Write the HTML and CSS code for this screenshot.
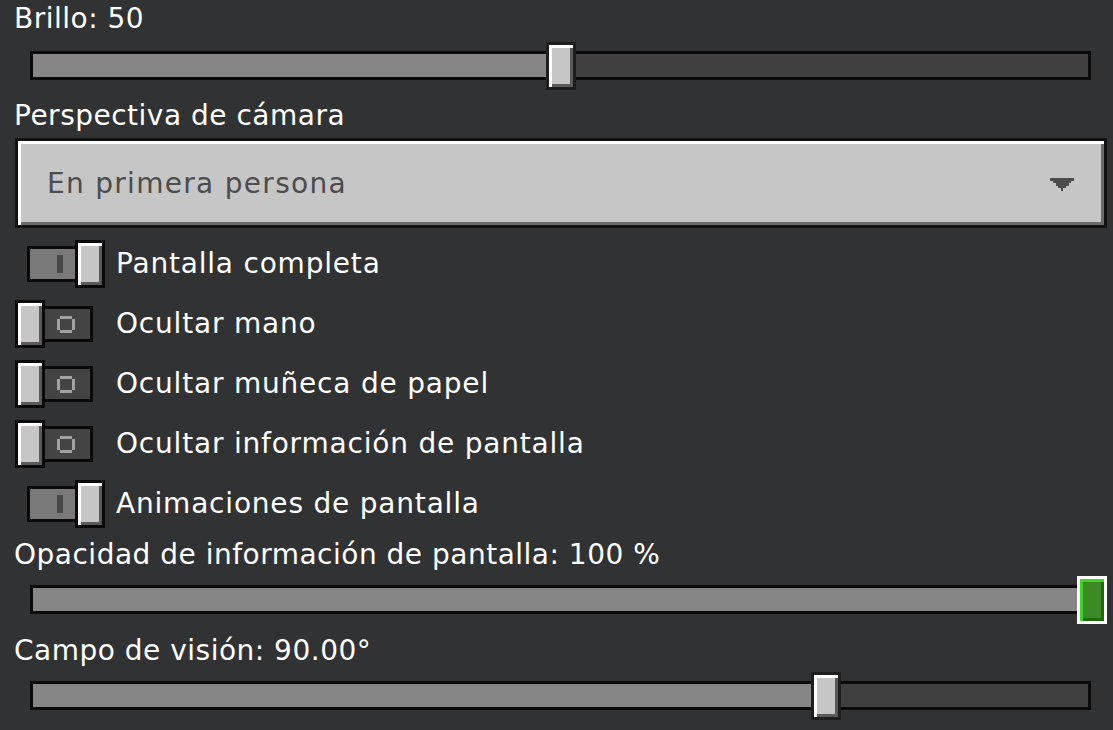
FILE: index.html
```html
<!DOCTYPE html>
<html lang="es">
<head>
<meta charset="utf-8">
<title>Ajustes de vídeo</title>
<link rel="stylesheet" href="styles.css">
</head>
<body>
<div class="page">
  <div class="label label-first">Brillo: 50</div>
  <div class="slider">
    <div class="track"><div class="fill" style="width:50%"></div></div>
    <div class="thumb" style="left:calc(50% - 15px)"></div>
  </div>

  <div class="label label-mid">Perspectiva de cámara</div>
  <div class="dropdown">
    <span class="dropdown-text">En primera persona</span>
    <svg class="arrow" width="24" height="13" viewBox="0 0 9 5" shape-rendering="crispEdges">
      <rect x="0" y="0" width="9" height="1" fill="#4c4c4c"/>
      <rect x="1" y="1" width="7" height="1" fill="#4c4c4c"/>
      <rect x="2" y="2" width="5" height="1" fill="#4c4c4c"/>
      <rect x="3" y="3" width="3" height="1" fill="#4c4c4c"/>
      <rect x="4" y="4" width="1" height="1" fill="#4c4c4c"/>
    </svg>
  </div>

  <div class="toggles">
    <div class="row">
      <div class="toggle on"><div class="ttrack"><i class="bar"></i></div><div class="tthumb"></div></div>
      <span class="row-text">Pantalla completa</span>
    </div>
    <div class="row">
      <div class="toggle off"><div class="ttrack"><svg class="ring" width="18" height="17" viewBox="0 0 18 17" shape-rendering="crispEdges"><path d="M3 0H15V3H3Z M3 14H15V17H3Z M0 3H3V14H0Z M15 3H18V14H15Z" fill="#a3a3a3"/></svg></div><div class="tthumb"></div></div>
      <span class="row-text">Ocultar mano</span>
    </div>
    <div class="row">
      <div class="toggle off"><div class="ttrack"><svg class="ring" width="18" height="17" viewBox="0 0 18 17" shape-rendering="crispEdges"><path d="M3 0H15V3H3Z M3 14H15V17H3Z M0 3H3V14H0Z M15 3H18V14H15Z" fill="#a3a3a3"/></svg></div><div class="tthumb"></div></div>
      <span class="row-text">Ocultar muñeca de papel</span>
    </div>
    <div class="row">
      <div class="toggle off"><div class="ttrack"><svg class="ring" width="18" height="17" viewBox="0 0 18 17" shape-rendering="crispEdges"><path d="M3 0H15V3H3Z M3 14H15V17H3Z M0 3H3V14H0Z M15 3H18V14H15Z" fill="#a3a3a3"/></svg></div><div class="tthumb"></div></div>
      <span class="row-text">Ocultar información de pantalla</span>
    </div>
    <div class="row">
      <div class="toggle on"><div class="ttrack"><i class="bar"></i></div><div class="tthumb"></div></div>
      <span class="row-text">Animaciones de pantalla</span>
    </div>
  </div>

  <div class="label label-low">Opacidad de información de pantalla: 100 %</div>
  <div class="slider slider-tight">
    <div class="track"><div class="fill" style="width:100%"></div></div>
    <div class="thumb thumb-green" style="left:calc(100% - 14px)"></div>
  </div>

  <div class="label label-low">Campo de visión: 90.00°</div>
  <div class="slider slider-tight">
    <div class="track"><div class="fill" style="width:75%"></div></div>
    <div class="thumb" style="left:calc(75% - 15px)"></div>
  </div>
</div>
</body>
</html>
```

FILE: styles.css
```css
* { box-sizing: border-box; }

html, body {
  margin: 0;
  padding: 0;
  background: #313233;
}

body {
  width: 1113px;
  height: 730px;
  overflow: hidden;
  font-family: "DejaVu Sans", sans-serif;
  font-size: 28px;
  letter-spacing: 0.5px;
  color: #ffffff;
}

.page {
  display: flex;
  flex-direction: column;
  padding-top: 3px;
}

.label {
  height: 32px;
  line-height: 32px;
  margin-left: 14px;
  white-space: nowrap;
}

.label-mid { margin-top: 10px; }
.label-low { margin-top: 11px; }

/* sliders */
.slider {
  position: relative;
  height: 48px;
  margin: 7px 22px 0 30px;
}

.slider-tight { margin-top: 5px; }

.track {
  margin-top: 9px;
  height: 29px;
  border: 3px solid #0a0a0a;
  background: #404040;
}

.fill {
  height: 100%;
  background: #868686;
}

.thumb {
  position: absolute;
  top: 0;
  width: 30px;
  height: 48px;
  border: 3px solid #1e1e1f;
  background: #c6c6c6;
  box-shadow: inset 3px 3px 0 #ffffff, inset -3px -3px 0 #5a5a5a;
}

.thumb-green {
  border-color: #ffffff;
  background: #3c8a26;
  box-shadow: inset 3px 3px 0 #3fd42a, inset -3px -3px 0 #1c6b0c;
}

/* dropdown */
.dropdown {
  display: flex;
  align-items: center;
  justify-content: space-between;
  height: 90px;
  margin: 6px 6px 0 15px;
  padding: 0 30px 0 29px;
  border: 3px solid #121212;
  background: #c6c6c6;
  box-shadow: inset 3px 3px 0 #ffffff, inset -3px -3px 0 #6b6b6b;
  color: #4c4c4c;
}

.dropdown-text {
  line-height: 32px;
  padding-top: 2px;
  letter-spacing: 1.3px;
}

.arrow {
  display: block;
  margin-top: 2px;
}

/* toggles */
.toggles {
  display: flex;
  flex-direction: column;
  gap: 12px;
  margin-top: 12px;
}

.row {
  display: flex;
  align-items: center;
  height: 48px;
  margin-left: 15px;
}

.row-text {
  line-height: 48px;
  margin-left: 11px;
  white-space: nowrap;
  letter-spacing: 0.8px;
}

.toggle {
  position: relative;
  width: 90px;
  height: 48px;
  flex: none;
}

.ttrack {
  position: absolute;
  top: 6px;
  width: 51px;
  height: 36px;
  border: 3px solid #0a0a0a;
}

.toggle.on .ttrack { left: 12px; background: #7a7a7a; }
.toggle.off .ttrack { left: 27px; background: #444444; }

.bar {
  position: absolute;
  left: 27px;
  top: 6px;
  width: 6px;
  height: 18px;
  background: #484848;
}

.ring {
  position: absolute;
  left: 12px;
  top: 7px;
  display: block;
}

.tthumb {
  position: absolute;
  top: 0;
  width: 30px;
  height: 48px;
  border: 3px solid #0a0a0a;
  background: #c6c6c6;
  box-shadow: inset 3px 3px 0 #ffffff, inset -3px -3px 0 #5a5a5a;
}

.toggle.on .tthumb { left: 60px; }
.toggle.off .tthumb { left: 0; }
```
